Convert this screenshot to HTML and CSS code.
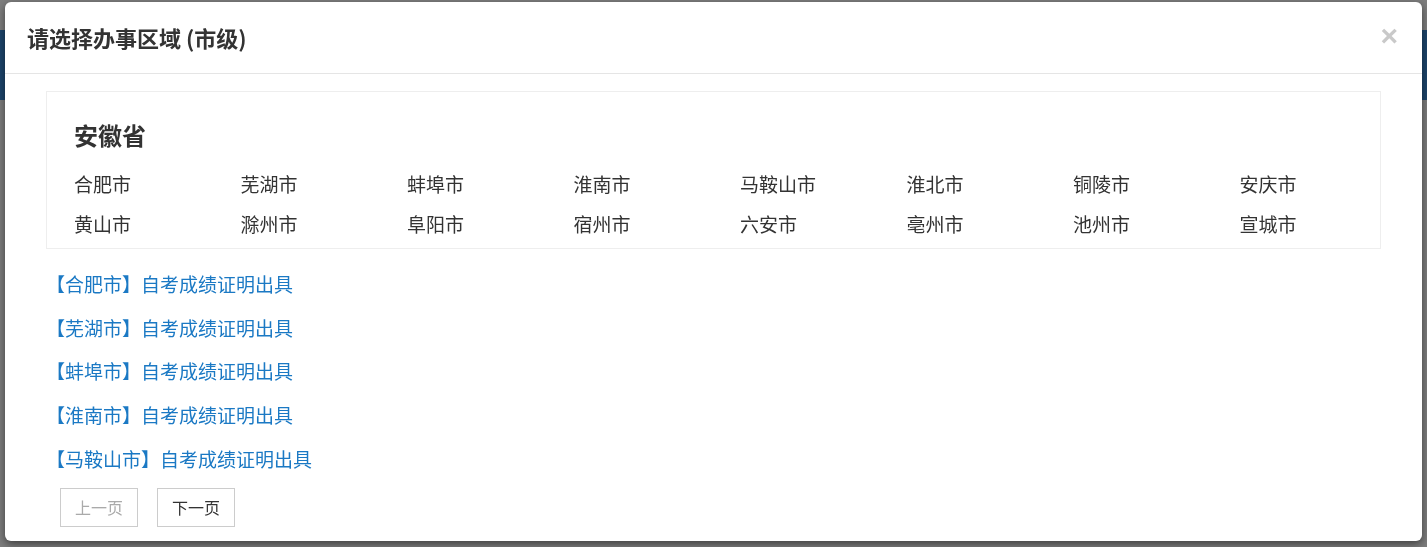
FILE: index.html
```html
<!DOCTYPE html>
<html lang="zh-CN">
<head>
    <meta charset="UTF-8">
    <meta name="viewport" content="width=device-width, initial-scale=1.0">
    <title>请选择办事区域</title>
    <link rel="stylesheet" href="styles.css">
</head>
<body>
    <!-- page behind the dialog -->
    <div class="page">
        <div class="page-top"></div>
        <div class="page-band"></div>
        <div class="page-rest"></div>
    </div>

    <!-- dimmed overlay with the region dialog -->
    <div class="overlay">
        <div class="modal">
            <div class="modal-header">
                <h4 class="modal-title">请选择办事区域 (市级)</h4>
                <span class="close">&times;</span>
            </div>
            <div class="modal-body">
                <div class="province">
                    <h3>安徽省</h3>
                    <ul class="city-list">
                        <li>合肥市</li>
                        <li>芜湖市</li>
                        <li>蚌埠市</li>
                        <li>淮南市</li>
                        <li>马鞍山市</li>
                        <li>淮北市</li>
                        <li>铜陵市</li>
                        <li>安庆市</li>
                        <li>黄山市</li>
                        <li>滁州市</li>
                        <li>阜阳市</li>
                        <li>宿州市</li>
                        <li>六安市</li>
                        <li>亳州市</li>
                        <li>池州市</li>
                        <li>宣城市</li>
                    </ul>
                </div>

                <ul class="item-list">
                    <li><a href="#">【合肥市】自考成绩证明出具</a></li>
                    <li><a href="#">【芜湖市】自考成绩证明出具</a></li>
                    <li><a href="#">【蚌埠市】自考成绩证明出具</a></li>
                    <li><a href="#">【淮南市】自考成绩证明出具</a></li>
                    <li><a href="#">【马鞍山市】自考成绩证明出具</a></li>
                </ul>

                <div class="pager">
                    <span class="pager-btn disabled">上一页</span>
                    <span class="pager-btn">下一页</span>
                </div>
            </div>
        </div>
    </div>
</body>
</html>
```

FILE: styles.css
```css
/* region picker dialog */
body {
    font-family: "Microsoft YaHei", "Noto Sans CJK SC", sans-serif;
    margin: 0;
    padding: 0;
    color: #333;
    background-color: #7c7c7c;
}

.page-top {
    height: 30px;
    background-color: #7e7e7e;
}

.page-band {
    height: 70px;
    background-color: #1d456c;
}

.page-rest {
    height: 447px;
    background-color: #7d7d7d;
}

.overlay {
    position: fixed;
    top: 0;
    left: 0;
    right: 0;
    bottom: 0;
    padding: 2px 5px 0 5px;
}

.modal {
    background-color: #fff;
    border-radius: 6px;
    box-shadow: 0 3px 9px rgba(0, 0, 0, 0.5);
    height: 539px;
    box-sizing: border-box;
}

.modal-header {
    display: flex;
    align-items: center;
    justify-content: space-between;
    height: 72px;
    padding: 0 24px 0 22px;
    border-bottom: 1px solid #e5e5e5;
    box-sizing: border-box;
}

.modal-title {
    margin: 0;
    font-size: 22px;
    font-weight: bold;
    line-height: 1.4;
    color: #333;
}

.close {
    font-family: "Liberation Sans", Arial, sans-serif;
    font-size: 30px;
    font-weight: bold;
    line-height: 1;
    color: #c9c9c9;
    margin-top: -4px;
    cursor: pointer;
}

.modal-body {
    padding: 17px 41px 15px 41px;
}

.province {
    border: 1px solid #eee;
    padding: 26px 0 4px 27px;
}

.province h3 {
    margin: 0 0 12px 0;
    font-size: 24px;
    line-height: 34px;
    font-weight: bold;
    color: #333;
}

.city-list {
    list-style: none;
    margin: 0;
    padding: 0;
    display: grid;
    grid-template-columns: repeat(8, 166.5px);
}

.city-list li {
    font-size: 19px;
    line-height: 40px;
    color: #333;
    cursor: pointer;
}

.item-list {
    list-style: none;
    margin: 13px 0 0 0;
    padding: 0;
}

.item-list li {
    line-height: 43.7px;
    font-size: 19px;
}

.item-list a {
    color: #1b79c4;
    text-decoration: none;
}

.pager {
    display: flex;
    gap: 19px;
    margin: 7px 0 0 14px;
}

.pager-btn {
    display: inline-block;
    width: 78px;
    height: 39px;
    line-height: 37px;
    text-align: center;
    font-size: 16px;
    color: #333;
    border: 1px solid #ccc;
    box-sizing: border-box;
    cursor: pointer;
}

.pager-btn.disabled {
    color: #aaa;
    cursor: default;
}
```
